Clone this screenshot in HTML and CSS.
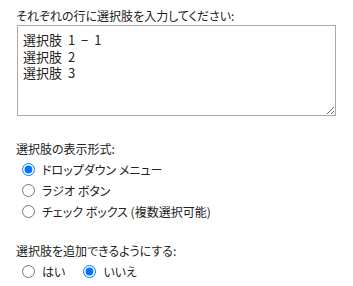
FILE: index.html
```html
<!DOCTYPE html>
<html lang="ja">
<head>
    <meta charset="UTF-8">
    <title>選択肢の設定</title>
    <link rel="stylesheet" href="styles.css">
</head>
<body>
    <div class="section first">
        <label class="caption" for="choices">それぞれの行に選択肢を入力してください:</label>
        <textarea id="choices" class="choices">選択肢 1 − 1
選択肢 2
選択肢 3</textarea>
    </div>

    <div class="section">
        <div class="caption">選択肢の表示形式:</div>
        <div class="options">
            <label class="option"><input type="radio" name="format" checked> ドロップダウン メニュー</label>
            <label class="option"><input type="radio" name="format"> ラジオ ボタン</label>
            <label class="option"><input type="radio" name="format"> チェック ボックス (複数選択可能)</label>
        </div>
    </div>

    <div class="section">
        <div class="caption">選択肢を追加できるようにする:</div>
        <div class="options inline">
            <label class="option"><input type="radio" name="fillin"> はい</label>
            <label class="option"><input type="radio" name="fillin" checked> いいえ</label>
        </div>
    </div>
</body>
</html>
```

FILE: styles.css
```css
body {
    margin: 0;
    padding: 7px 16px 0;
    font-family: "Noto Sans CJK JP", sans-serif;
    font-size: 12px;
    font-feature-settings: "palt";
    color: #222;
    background-color: white;
}
.section {
    margin-bottom: 20px;
}
.section.first {
    margin-bottom: 24px;
}
.section:last-child {
    margin-bottom: 0;
}
.caption {
    display: block;
    line-height: 18px;
}
.choices {
    display: block;
    box-sizing: border-box;
    width: 319px;
    height: 91px;
    margin: 0 0 0 1px;
    padding: 6px 5px 5px;
    border: 1px solid #a9a9a9;
    font-family: "Noto Sans CJK JP", sans-serif;
    font-size: 13px;
    font-feature-settings: normal;
    word-spacing: 3px;
    line-height: 16.5px;
    color: #222;
}
.options {
    margin-top: 1px;
    padding-left: 6px;
}
.option {
    display: flex;
    align-items: center;
    height: 21px;
}
.option input {
    margin: 0 7px 0 0;
    width: 13px;
    height: 13px;
    accent-color: #0075ff;
}
.inline {
    display: flex;
    gap: 18px;
}
```
